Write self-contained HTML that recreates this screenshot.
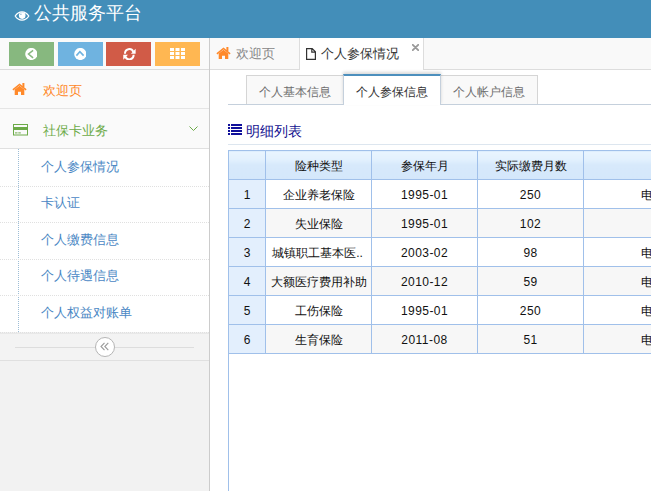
<!DOCTYPE html>
<html><head><meta charset="utf-8">
<style>
*{box-sizing:border-box;margin:0;padding:0}
html,body{width:651px;height:491px;overflow:hidden;background:#fff;font-family:"Liberation Sans",sans-serif;font-size:13px;color:#333}
.a{position:absolute}
.t{position:absolute;white-space:nowrap;line-height:1}
#hdr{left:0;top:0;width:651px;height:38px;background:#438eb9}
#side{left:0;top:38px;width:210px;height:453px;background:#f2f2f2;border-right:1px solid #cccccc}
.btn{top:42px;width:45px;height:24px}
.sep{height:1px;background:#e5e5e5}
.dotv{border-left:1px dotted #9dbdd6}
.doth{border-top:1px dotted #e0e0e0}
</style></head><body>
<!-- header -->
<div id="hdr" class="a"></div>
<svg class="a" style="left:14px;top:10px" width="16" height="12" viewBox="0 0 16 12"><path d="M1.2 6C2.8 3.4 5.2 1.8 8 1.8S13.2 3.4 14.8 6C13.2 8.6 10.8 10.1 8 10.1S2.8 8.6 1.2 6z" fill="none" stroke="#fff" stroke-width="1.3"/><circle cx="8.2" cy="5.6" r="3.3" fill="#fff"/><circle cx="6.9" cy="4.2" r="0.8" fill="#8fbcd8"/></svg>
<div class="t" style="left:34px;top:4px;font-size:18px;color:#fff">公共服务平台</div>

<!-- sidebar -->
<div id="side" class="a"></div>
<div class="a" style="left:0;top:38px;width:209px;height:111px;background:#fafafa"></div>
<div class="a btn" style="left:9px;background:#87b87f"></div>
<div class="a btn" style="left:58px;background:#6fb3e0"></div>
<div class="a btn" style="left:106px;background:#d15b47"></div>
<div class="a btn" style="left:155px;background:#ffb752"></div>
<svg class="a" style="left:24.8px;top:47.9px" width="12.6" height="12" viewBox="0 0 12.6 12"><circle cx="6.3" cy="6" r="6.1" fill="#fff"/><path d="M8.1 2.3L3.5 6l4.6 3.9" stroke="#87b87f" stroke-width="1.5" fill="none"/></svg>
<svg class="a" style="left:73.8px;top:47.9px" width="12.6" height="12" viewBox="0 0 12.6 12"><circle cx="6.3" cy="6" r="6.1" fill="#fff"/><path d="M2.4 7.6L5.9 3.6l3.7 4" stroke="#6fb3e0" stroke-width="1.6" fill="none"/></svg>
<svg class="a" style="left:122.5px;top:47.5px" width="13" height="12.5" viewBox="0 0 14 13" preserveAspectRatio="none"><path d="M2.1 5.9A4.7 4.7 0 0 1 11.06 3.9" stroke="#fff" stroke-width="2.1" fill="none"/><path d="M13.6 0.8V5.9H8.5z" fill="#fff"/><path d="M11.5 7.1A4.7 4.7 0 0 1 2.54 9.1" stroke="#fff" stroke-width="2.1" fill="none"/><path d="M0.3 12.2V7.1H5.4z" fill="#fff"/></svg>
<svg class="a" style="left:170px;top:48px" width="15" height="11" viewBox="0 0 15 11"><g fill="#fff"><rect x="0" y="0" width="4" height="3"/><rect x="5.5" y="0" width="4" height="3"/><rect x="11" y="0" width="4" height="3"/><rect x="0" y="4" width="4" height="3"/><rect x="5.5" y="4" width="4" height="3"/><rect x="11" y="4" width="4" height="3"/><rect x="0" y="8" width="4" height="3"/><rect x="5.5" y="8" width="4" height="3"/><rect x="11" y="8" width="4" height="3"/></g></svg>
<div class="a sep" style="left:0;top:69px;width:209px;background:#dcdcdc"></div>

<!-- welcome item -->
<svg class="a" style="left:12px;top:83px" width="15" height="12" viewBox="0 0 15 12"><path d="M0.9 6.9L7.5 1.5l6.6 5.4" stroke="#ff892a" stroke-width="1.6" fill="none"/><rect x="10.4" y="0" width="2" height="4.2" fill="#ff892a"/><path d="M2.7 6.4L7.5 2.7l4.8 3.7V12H9V8.7H6V12H2.7z" fill="#ff892a"/></svg>
<div class="t" style="left:43px;top:84px;color:#ff892a">欢迎页</div>
<div class="a sep" style="left:0;top:108px;width:209px"></div>

<!-- card item -->
<svg class="a" style="left:13px;top:124px" width="15" height="12" viewBox="0 0 15 12"><rect x="0.5" y="0.5" width="14" height="10.5" fill="none" stroke="#6caa48" stroke-width="1"/><rect x="0" y="3" width="15" height="3" fill="#6caa48"/><rect x="2" y="8.4" width="2.5" height="1" fill="#6caa48"/><rect x="5.3" y="8.4" width="2.5" height="1" fill="#6caa48"/></svg>
<div class="t" style="left:43px;top:124px;color:#6caa48">社保卡业务</div>
<svg class="a" style="left:189px;top:126px" width="9" height="5" viewBox="0 0 9 5"><path d="M0.5 0.5l4 4 4-4" stroke="#6caa48" stroke-width="1" fill="none"/></svg>
<div class="a" style="left:0;top:148px;width:209px;height:1px;background:#e0e0e0"></div>

<!-- submenu -->
<div class="a" style="left:0;top:149px;width:209px;height:183px;background:#fff"></div>
<div class="a dotv" style="left:18px;top:149px;height:183px"></div>
<div class="a doth" style="left:0;top:186px;width:209px"></div>
<div class="a doth" style="left:0;top:222px;width:209px"></div>
<div class="a doth" style="left:0;top:259px;width:209px"></div>
<div class="a doth" style="left:0;top:295px;width:209px"></div>
<div class="a doth" style="left:0;top:332px;width:209px"></div>
<div class="t" style="left:41px;top:160px;color:#4a87c4">个人参保情况</div>
<div class="t" style="left:41px;top:196px;color:#4a87c4">卡认证</div>
<div class="t" style="left:41px;top:233px;color:#4a87c4">个人缴费信息</div>
<div class="t" style="left:41px;top:269px;color:#4a87c4">个人待遇信息</div>
<div class="t" style="left:41px;top:306px;color:#4a87c4">个人权益对账单</div>

<!-- collapse -->
<div class="a" style="left:0;top:333px;width:209px;height:27px;background:#f3f3f3;border-top:1px solid #e8e8e8"></div>
<div class="a" style="left:15px;top:347px;width:179px;height:1px;background:#dddddd"></div>
<div class="a" style="left:95px;top:337px;width:20px;height:20px;border-radius:50%;border:1px solid #b5b5b5;background:#fff"></div>
<svg class="a" style="left:100px;top:342px" width="10" height="10" viewBox="0 0 10 10"><path d="M4.5 0.8L1 4.5l3.5 3.7M8.3 0.8L4.8 4.5l3.5 3.7" stroke="#9a9a9a" stroke-width="1.1" fill="none"/></svg>
<div class="a" style="left:0;top:360px;width:209px;height:1px;background:#e0e0e0"></div>

<!-- tab bar row 1 -->
<div class="a" style="left:210px;top:38px;width:441px;height:32px;background:#f9f9f9;border-bottom:1px solid #dddddd"></div>
<div class="a" style="left:299px;top:38px;width:1px;height:31px;background:#dddddd"></div>
<svg class="a" style="left:216px;top:47px" width="15" height="12" viewBox="0 0 15 12"><path d="M0.9 6.9L7.5 1.5l6.6 5.4" stroke="#ff892a" stroke-width="1.6" fill="none"/><rect x="10.4" y="0" width="2" height="4.2" fill="#ff892a"/><path d="M2.7 6.4L7.5 2.7l4.8 3.7V12H9V8.7H6V12H2.7z" fill="#ff892a"/></svg>
<div class="t" style="left:236px;top:47px;color:#888">欢迎页</div>
<div class="a" style="left:300px;top:38px;width:124px;height:32px;background:#fff;border-right:1px solid #dddddd"></div>
<svg class="a" style="left:306px;top:48px" width="10" height="12" viewBox="0 0 10 12"><path d="M0.6 0.6h5.6l3.2 3.2v7.6h-8.8z M5.8 0.6v3.6h3.6" stroke="#333" stroke-width="1.2" fill="none"/></svg>
<div class="t" style="left:321px;top:47px;color:#333">个人参保情况</div>
<svg class="a" style="left:412px;top:44px" width="7" height="7" viewBox="0 0 7 7"><path d="M0.8 0.8l5.4 5.4M6.2 0.8L0.8 6.2" stroke="#999" stroke-width="1.8" stroke-linecap="round"/></svg>

<!-- sub tabs -->
<div class="a" style="left:228px;top:104px;width:423px;height:1px;background:#c5d0dc"></div>
<div class="a" style="left:246px;top:75px;width:98px;height:29px;background:#f9f9f9;border:1px solid #d5d5d5;border-bottom:none"></div>
<div class="t" style="left:259px;top:86px;color:#6f6f6f;font-size:12px">个人基本信息</div>
<div class="a" style="left:440px;top:75px;width:98px;height:29px;background:#f9f9f9;border:1px solid #d5d5d5;border-bottom:none"></div>
<div class="t" style="left:453px;top:86px;color:#6f6f6f;font-size:12px">个人帐户信息</div>
<div class="a" style="left:343px;top:74px;width:98px;height:31px;background:#fff;border:1px solid #c5d0dc;border-top:2px solid #4c8fbd;border-bottom:none;box-shadow:0 -2px 3px 0 rgba(0,0,0,.15)"></div>
<div class="t" style="left:356px;top:86px;color:#333;font-size:12px">个人参保信息</div>

<!-- heading -->
<svg class="a" style="left:228px;top:124px" width="14" height="11" viewBox="0 0 14 11"><g fill="#10109a"><rect x="0" y="0" width="2" height="2"/><rect x="3" y="0" width="11" height="2"/><rect x="0" y="3" width="2" height="2"/><rect x="3" y="3" width="11" height="2"/><rect x="0" y="6" width="2" height="2"/><rect x="3" y="6" width="11" height="2"/><rect x="0" y="9" width="2" height="2"/><rect x="3" y="9" width="11" height="2"/></g></svg>
<div class="t" style="left:246px;top:124px;font-size:14px;color:#12108f">明细列表</div>
<div class="a" style="left:228px;top:144px;width:423px;height:1px;background:#dde6ef"></div>

<!-- grid -->
<div class="a" style="left:228px;top:150px;width:1px;height:341px;background:#a0c0ea"></div>
<style>
#tbl{position:absolute;left:228px;top:150px;width:476px;border-collapse:collapse;table-layout:fixed;font-size:12px;color:#111}
#tbl td{border:1px solid #a0c0ea;height:29px;text-align:center;padding:2px 0 0 0;white-space:nowrap;overflow:hidden}
#tbl tr.h td{background:linear-gradient(#e9f5ff 0,#e3f1fe 28%,#d7e9fb 48%,#d4e7fb 100%)}
#tbl td.n{background:#e3effd}
#tbl tr.e td{background:#f7f7f7}
#tbl tr.e td.n{background:#e3effd}
#tbl td.l{text-align:left;padding-left:57px}
#tbl td.d{letter-spacing:0.45px}
</style>
<table id="tbl"><colgroup><col style="width:37px"><col style="width:106px"><col style="width:106px"><col style="width:106px"><col style="width:120px"></colgroup>
<tr class="h"><td class="n" style="background:linear-gradient(#e9f5ff 0,#e3f1fe 28%,#d7e9fb 48%,#d4e7fb 100%)"></td><td>险种类型</td><td>参保年月</td><td>实际缴费月数</td><td></td></tr>
<tr><td class="n">1</td><td>企业养老保险</td><td class="d">1995-01</td><td class="d">250</td><td class="l">电</td></tr>
<tr class="e"><td class="n">2</td><td>失业保险</td><td class="d">1995-01</td><td class="d">102</td><td class="l"></td></tr>
<tr><td class="n">3</td><td><span style="position:relative;left:-1px">城镇职工基本医..</span></td><td class="d">2003-02</td><td class="d">98</td><td class="l">电</td></tr>
<tr class="e"><td class="n">4</td><td>大额医疗费用补助</td><td class="d">2010-12</td><td class="d">59</td><td class="l">电</td></tr>
<tr><td class="n">5</td><td>工伤保险</td><td class="d">1995-01</td><td class="d">250</td><td class="l">电</td></tr>
<tr class="e"><td class="n">6</td><td>生育保险</td><td class="d">2011-08</td><td class="d">51</td><td class="l">电</td></tr>
</table>

</body></html>
